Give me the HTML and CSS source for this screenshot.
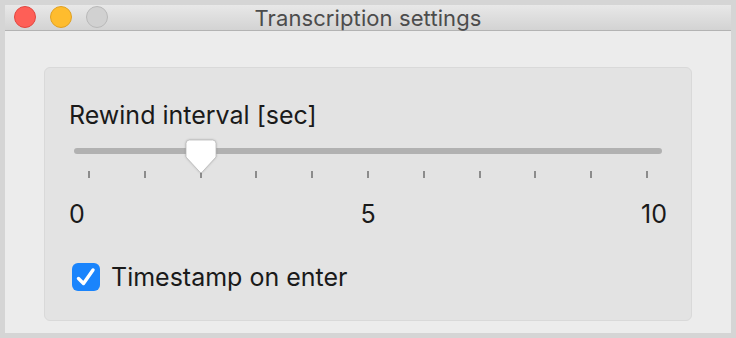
FILE: index.html
```
<!DOCTYPE html>
<html>
<head>
<meta charset="utf-8">
<link rel="stylesheet" href="styles.css">
</head>
<body>
<div class="window">
  <div class="titlebar">
    <div class="lights">
      <span class="light red"></span>
      <span class="light yellow"></span>
      <span class="light gray"></span>
    </div>
    <div class="title">Transcription settings</div>
    <div></div>
  </div>
  <div class="content">
    <div class="panel">
      <div class="label">Rewind interval [sec]</div>
      <div class="slider">
        <div class="track"></div>
        <div class="ticks">
          <span></span><span></span><span></span><span></span><span></span><span></span><span></span><span></span><span></span><span></span><span></span>
        </div>
        <svg class="thumb" width="32" height="36" viewBox="0 0 32 36">
          <path d="M4.5 1 H27.5 A3.5 3.5 0 0 1 31 4.5 V18 L17 33.2 Q16 34.3 15 33.2 L1 18 V4.5 A3.5 3.5 0 0 1 4.5 1 Z" fill="#ffffff" stroke="#b9b9b9" stroke-width="0.8"/>
        </svg>
      </div>
      <div class="scale">
        <span class="s-left">0</span><span class="s-mid">5</span><span class="s-right">10</span>
      </div>
      <div class="check-row">
        <span class="checkbox">
          <svg width="28" height="28" viewBox="0 0 28 28"><path d="M6.5 15.5 L11.5 20.5 L21 7" fill="none" stroke="#ffffff" stroke-width="3.4" stroke-linecap="round" stroke-linejoin="round"/></svg>
        </span>
        <span class="check-label">Timestamp on enter</span>
      </div>
    </div>
  </div>
</div>
</body>
</html>
```
FILE: styles.css
```
html, body {
  margin: 0;
  padding: 0;
}
body {
  background: #d5d5d5;
  width: 736px;
  height: 338px;
  padding: 5px;
  box-sizing: border-box;
  font-family: "Inter", "Noto Sans", sans-serif;
}
.window {
  width: 726px;
  height: 328px;
  background: #ececec;
  display: flex;
  flex-direction: column;
}
.titlebar {
  height: 25px;
  border-bottom: 1px solid #b3b3b3;
  background: linear-gradient(#e8e8e8, #d3d3d3);
  display: grid;
  grid-template-columns: 1fr auto 1fr;
  align-items: center;
}
.lights {
  display: flex;
  gap: 14px;
  padding-left: 9px;
  align-items: center;
  align-self: start;
  margin-top: 0.5px;
  height: 22px;
}
.light {
  width: 22px;
  height: 22px;
  border-radius: 50%;
  box-sizing: border-box;
}
.red { background: #fe5f57; border: 1px solid #e2463f; }
.yellow { background: #febc2e; border: 1px solid #e0a123; }
.gray { background: #d1d1d1; border: 1px solid #b9b9b9; }
.title {
  font-size: 22px;
  color: #4c4c4c;
  line-height: 25px;
  letter-spacing: 0.1px;
  padding-top: 1px;
}
.content {
  flex: 1;
  padding: 36px 39px 12px 39px;
  display: flex;
}
.panel {
  flex: 1;
  background: #e3e3e3;
  border: 1px solid #d9d9d9;
  border-radius: 6px;
  padding: 31px 24px 0 24px;
  display: flex;
  flex-direction: column;
}
.label, .scale, .check-label {
  font-size: 25px;
  line-height: 32px;
  color: #1a1a1a;
}
.slider {
  position: relative;
  height: 40px;
  margin-top: 8px;
}
.track {
  margin: 9px 5px 0 5px;
  height: 6px;
  border-radius: 3px;
  background: #b1b1b1;
}
.ticks {
  display: flex;
  justify-content: space-between;
  margin: 17px 19px 0 19px;
}
.ticks span {
  width: 2px;
  height: 7px;
  background: #8c8c8c;
}
.thumb {
  position: absolute;
  left: 116px;
  top: 0;
  filter: drop-shadow(0 0.5px 0.8px rgba(0,0,0,0.18));
}
.scale {
  display: grid;
  grid-template-columns: 1fr 1fr 1fr;
  margin-top: 19px;
}
.s-left { text-align: left; }
.s-mid { text-align: center; }
.s-right { text-align: right; }
.check-row {
  display: flex;
  align-items: center;
  margin-top: 31px;
  padding-left: 3px;
  gap: 11px;
}
.checkbox {
  width: 28px;
  height: 28px;
  border-radius: 6px;
  background: #1a84fc;
  display: flex;
}
```
